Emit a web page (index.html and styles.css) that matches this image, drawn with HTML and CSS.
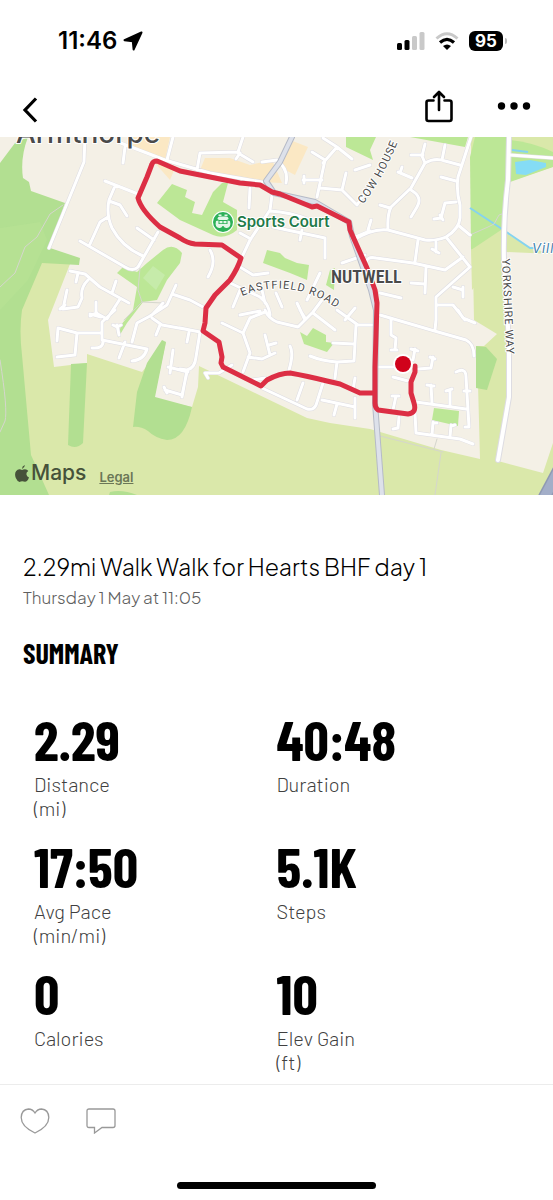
FILE: index.html
```html
<!DOCTYPE html>
<html lang="en">
<head>
    <meta charset="UTF-8">
    <meta name="viewport" content="width=device-width, initial-scale=1.0">
    <title>Walk for Hearts BHF day 1</title>
    <link rel="stylesheet" href="styles.css">
</head>
<body>

    <!-- Phone status bar -->
    <div class="status-bar">
        <div class="status-left">
            <span class="clock">11:46</span>
            <svg width="20" height="20" viewBox="0 0 20 20" stroke="#000" stroke-width="2" stroke-linejoin="round" aria-hidden="true">
                <path d="M18.500 1.500 L1.500 9.200 L9.800 10.200 L10.600 18.500Z"/>
            </svg>
        </div>
        <div class="status-right">
            <svg width="28" height="18" viewBox="0 0 28 18" aria-hidden="true">
                <rect x="0" y="11" width="5" height="7" rx="1.500"/>
                <rect x="7.500" y="8" width="5" height="10" rx="1.500"/>
                <rect x="15" y="4" width="5" height="14" rx="1.500" fill="#c9c9c9"/>
                <rect x="22.500" y="0" width="5" height="18" rx="1.500" fill="#c9c9c9"/>
            </svg>
            <svg width="24" height="18" viewBox="0 0 24 18" aria-hidden="true">
                <path d="M1.500 6.500 Q12 -3 22.500 6.500" fill="none" stroke="#c9c9c9" stroke-width="3"/>
                <path d="M5 10.500 Q12 4.200 19 10.500" fill="none" stroke="#000" stroke-width="3.200"/>
                <path d="M8 14 Q12 10.800 16 14 L12 18Z"/>
            </svg>
            <span class="battery">95</span>
        </div>
    </div>

    <!-- Navigation -->
    <header class="nav-bar">
        <button class="icon-button" aria-label="Back">
            <svg width="16" height="26" viewBox="0 0 16 26" fill="none" stroke="#000" stroke-width="3.200">
                <path d="M14 1.500 L3 13 L14 24.500"/>
            </svg>
        </button>
        <div class="nav-actions">
            <button class="icon-button" aria-label="Share">
                <svg width="28" height="33" viewBox="0 0 28 33" fill="none" stroke="#000" stroke-width="2.600" stroke-linejoin="round" stroke-linecap="round">
                    <path d="M8.500 10.500 H3.500 Q1.500 10.500 1.500 12.500 V29 Q1.500 31 3.500 31 H24.500 Q26.500 31 26.500 29 V12.500 Q26.500 10.500 24.500 10.500 H19.500"/>
                    <path d="M14 20 V2.500 M9 7 L14 2 L19 7"/>
                </svg>
            </button>
            <button class="icon-button" aria-label="More">
                <svg width="34" height="8" viewBox="0 0 34 8">
                    <circle cx="4.500" cy="4" r="3.700"/>
                    <circle cx="17" cy="4" r="3.700"/>
                    <circle cx="29.500" cy="4" r="3.700"/>
                </svg>
            </button>
        </div>
    </header>

    <!-- Route map -->
    <div class="map">
        <svg class="map-canvas" viewBox="0 137 553 358" role="img" aria-label="Map of the walk around Armthorpe">
            <defs>
                <path id="roads" d="M85 137L84 162L49 248 M125 147L123 163 M118 142L165 160L210 173L262 182 M173 137L167 160
                    M105 181L138 194 M115 186L109 200Q106 215 112 228Q122 247 143 256 M109 201L120 205L127 216 M108 217L100 222L90 244
                    M80 241L125 267Q133 272 138 267L158 232 M137 228L154 240 M70 271L85 274L100 287L129 303 M78 273L76 282
                    M88 280Q80 288 82 298L78 307L63 309L67 290 M120 299L107 319L96 313L96 302 M116 281L112 293 M60 309L65 305 M90 316L97 313
                    M176 285L167 305L150 316 M172 294L190 300L203 307 M115 310L102 322L102 340L147 349Q144 360 132 361
                    M90 314L101 317 M102 333L77 333L58 328L57 341 M77 333L75 355L57 357 M103 340Q104 349 92 348 M125 342L119 358
                    M132 342L137 323L152 315L163 303 M152 318L162 325L190 330 M160 325L156 335 M117 325L119 335 M113 325L117 327L121 325
                    M173 350L170 373 M168 367L188 372 M187 372L182 395L165 390 M164 387L167 393
                    M180 328L200 332 M189 332L187 342 M200 332L196 357Q195 368 187 370L180 369 M187 370L182 397
                    M205 373L219 373L232 365 M208 378L205 373 M222 323L243 333 M265 312L250 318L243 333L250 353L243 372 M248 357L262 359L275 353
                    M265 335L270 355 M269 345L276 343 M265 310Q268 318 277 322L298 327L313 312L322 300 M300 310L305 318 M313 313L335 330
                    M337 310L358 325L376 325 M356 325L354 361L337 362Q322 361 310 356 M333 343L354 344 M337 362L335 378
                    M290 346Q294 353 289 370 M252 380L265 378 M262 388L307 409Q315 411 317 402L323 383 M303 383L297 400
                    M322 400L355 407 M337 404L334 415 M355 398L355 418 M355 378L353 390
                    M363 325L374 325 M380 315L438 332L466 340Q474 344 474 356 M391 318L391 335L396 338L395 350 M391 350L397 350
                    M436 320L435 330 M458 310L463 318L475 323 M378 367L393 367 M393 377L408 381 M415 349L413 360 M411 349L418 351
                    M418 369L431 368L433 357 M430 357L435 359 M396 396L393 410 M392 396L399 396 M399 417L398 428L393 429
                    M416 402L466 409 M431 385L432 403 M427 385L434 386 M450 390L450 406 M446 391L452 389
                    M456 372Q466 367 466 377L469 427L465 427 M464 391L470 391 M415 413L416 433L460 439L473 444 M433 422L432 435 M451 425L450 437 M433 423L437 423 M451 426L455 425
                    M471 137L458 177Q456 190 460 205V218Q459 229 446 237Q437 241 425 240L388 230Q372 228 352 241
                    M388 230Q387 215 391 207L411 188L425 163Q435 157 445 161L460 165 M425 144L422 156L425 163 M411 155L423 155 M445 145L442 160
                    M398 172L412 178 M402 167L400 173 M441 177L456 181 M411 190Q423 197 417 207L411 217 M380 205L390 208
                    M456 202L445 203L441 218L434 219 M440 215L443 220 M368 230L371 220 M458 225L470 235
                    M446 237L470 267L436 297L436 320 M418 240L415 262 M366 262Q368 256 376 258L413 263L445 270L463 257
                    M436 242L436 252 M432 249L439 253 M426 267L425 293 M411 283L425 284 M380 293L401 298 M438 305H453L465 320
                    M453 287L463 290 M463 287V297 M197 170L200 153L238 152L243 137 M238 153L253 162 M240 153L236 159
                    M262 162L277 160Q289 170 286 183 M250 188L249 208 M272 195L270 210L250 240L242 257
                    M270 211Q290 212 310 220 M273 227L325 238V258 M240 233L251 239 M302 230L300 240 M240 267L253 275L268 273 M210 250Q217 262 208 277
                    M228 282L260 297Q269 304 270 315 M240 290L233 307 M262 290L265 303 M276 293L282 307 M312 152L325 160L317 197 M303 180L322 180 M304 176V183
                    M320 188L342 190L357 205L372 182 M346 173L342 190 M323 163L337 147L323 138 M337 147L352 159 M355 170L370 165
                    M353 238L370 231 M342 263L365 255 M297 303L305 320 M320 273L307 300 M355 308L345 320 M240 315L260 311 M510 155L553 158"/>
                <path id="yorkshire-way" d="M509 137L508 180Q503 220 504 262L509 343V397L498 460"/>
                <path id="main-road" d="M292 137L280 162L266 181L274 193L315 202L349 222L352 236L371 290L376 310L375 403L382 495"/>
                <path id="eastfield-line" d="M242 296Q290 276 338 309L346 315"/>
                <path id="cow-house-line" d="M363 204Q384 178 401 134"/>
                <path id="yorkshire-line" d="M502 259Q504 300 507 365"/>
            </defs>

            <rect y="137" width="553" height="358" fill="#dae8aa"/>

            <!-- Built-up land -->
            <g fill="#f4f0e6">
                <path d="M0 137H471V157L474 320L497 334L484 346H477L480 459L441 450L370 429L330 423L307 418L199 366L198 387L192 407L160 400L154 397L166 342L142 372L87 354V363L54 367L48 320L70 264L50 248L0 250Z"/>
                <path d="M509 182L553 167V443L543 473L498 461L509 397V343L506 252L553 254V210L506 233Z"/>
                <path d="M509 182L553 167V254L530 248L506 233Z"/>
            </g>

            <!-- Woods and parks -->
            <g fill="#b2df91">
                <path d="M0 163L15 143L28 137Q20 158 23 178L29 182L31 191L65 203L50 248L80 258L79 265L42 263L22 310Q19 330 22 355L31 455L49 495H0Z"/>
                <path d="M71 364L87 363L83 443Q76 450 68 445Z"/>
                <path d="M162 340L166 342L155 397L192 407Q185 440 167 440Q155 438 148 431Q140 426 133 427L137 392L147 363Z"/>
                <path d="M110 492Q122 489 137 495H109Z"/>
                <path d="M476 346L486 347L497 359L487 390L476 388Z"/>
            </g>
            <path d="M0 228L40 222L47 240L28 280L0 310Z" fill="#b9e495" opacity="0.500"/>
            <g fill="#bce796">
                <path d="M157 203L172 184L187 190L185 197L195 202L192 213L202 215L213 192L222 183H228L223 202L237 210V230Q225 240 213 235L180 220Z"/>
                <path d="M117 273L123 267L137 272L147 263L163 250Q173 242 182 253L180 263L167 280L157 300L143 302L127 323L118 338L121 325L133 310L137 287Z"/>
                <path d="M267 250L280 253L285 258L297 263L309 265L307 280L290 273L263 263Z"/>
                <path d="M330 270L335 268L334 290L326 285Z"/>
                <path d="M300 332L307 336L313 328L326 335V342L334 343L327 352L304 344Z"/>
                <path d="M434 408L459 411L458 426L432 420Z"/>
                <path d="M470 157L475 137H510L508 180L504 233L471 250Z"/>
                <path d="M410 137H468L465 147Z"/>
                <path d="M346 137H376L370 150L373 160L346 147Z"/>
                <path d="M510 140Q532 142 553 152V167L510 182Z"/>
            </g>
            <path d="M143 278L153 266L165 275L156 290Z" fill="#c6ebaa"/>
            <path d="M471 250L504 228V252L472 290Z" fill="#dae8aa"/>

            <!-- Shops -->
            <g fill="#fbe8c4">
                <path d="M127 145L133 137H170L165 160Z"/>
                <path d="M155 163L175 168L170 180Z"/>
                <path d="M205 158H230L250 165L272 160L282 183L260 182L200 170Z"/>
                <path d="M290 140L308 147L295 175L280 167Z"/>
            </g>

            <!-- Water -->
            <path d="M515 162L530 160L546 163V167L526 175L516 174Z" fill="#85dcf5"/>
            <path d="M512 150L528 152M470 208L496 225L530 248H536" fill="none" stroke="#85d3ef" stroke-width="2"/>

            <!-- Footpaths -->
            <path class="footpath" d="M63 205L50 214L37 237L25 247L15 273L0 287M140 268L138 290L142 302L163 303M142 302L124 320M0 360Q8 410 5 421L0 432M470 235L488 227L494 224L499 215L505 213M380 436L443 452M437 439L434 449M441 453L435 495"/>

            <!-- Roads -->
            <use href="#roads" class="road-casing"/>
            <use href="#yorkshire-way" class="road-casing road-wide-casing"/>
            <use href="#roads" class="road"/>
            <use href="#yorkshire-way" class="road road-wide"/>
            <use href="#main-road" class="main-road-casing"/>
            <use href="#main-road" class="main-road"/>
            <path d="M543 500L560 468" fill="none" stroke="#8f99b3" stroke-width="13"/>
            <path d="M543 500L560 468" fill="none" stroke="#a3aec8" stroke-width="10"/>

            <!-- Walked route -->
            <path class="route" d="M415 366L415 372L411 382V393L414 403Q417 413 408 414L378 410Q375 408 375 403V367L377 303L375 290L367 268L350 230L349 222L317 206L312 207L280 194L272 192L260 185L240 183L180 171L157 161Q153 161 152 164L147 177L138 198Q141 210 160 227L180 238Q187 243 195 244L222 245L241 258Q238 268 230 280L215 295L206 308L205 323L203 331L219 342L222 357L221 363L223 367L261 386L267 380Q280 373 290 373Q307 376 327 381L340 384L360 393H374"/>
            <circle cx="403" cy="364" r="10" fill="#fff"/>
            <circle cx="403" cy="364" r="8" fill="#d0021b"/>

            <!-- Place labels -->
            <g class="map-labels">
                <text class="label-town" x="16" y="143">Armthorpe</text>
                <text class="label-area" x="331" y="283">NUTWELL</text>
                <text class="label-road"><textPath href="#eastfield-line">EASTFIELD ROAD</textPath></text>
                <text class="label-road"><textPath href="#cow-house-line">COW HOUSE</textPath></text>
                <text class="label-road"><textPath href="#yorkshire-line">YORKSHIRE WAY</textPath></text>
                <text class="label-water" x="532" y="253">Vill</text>
                <text class="label-place" x="237" y="227">Sports Court</text>
            </g>
            <circle cx="223" cy="222" r="11" fill="#fff"/>
            <circle cx="223" cy="222" r="10" fill="#2cb157"/>
            <g fill="#e4f6e8">
                <path d="M217.500 219Q217.500 216.500 220 216.500H226Q228.500 216.500 228.500 219L227 220H219Z"/>
                <path d="M216 221Q214.500 227 219 228Q221.500 228.500 222.500 226H223.500Q224.500 228.500 227 228Q231.500 227 230 221L227.500 220.500V224H218.500V220.500Z"/>
                <path d="M219.500 221H222.500V223.200H219.500ZM223.500 221H226.500V223.200H223.500Z"/>
                <path d="M218.500 214.500H221.500V216H218.500ZM224.500 214.500H227.500V216H224.500Z"/>
            </g>
        </svg>
        <div class="map-credit">
            <span class="map-brand">
                <svg width="14" height="17" viewBox="0 0 14 17" aria-hidden="true">
                    <path d="M9.800 0Q10 2.800 7 4Q6.800 1.200 9.800 0ZM7 5Q8 4.200 10 4.200Q12.200 4.200 13.300 6Q11.200 7.200 11.400 9.300Q11.600 11.500 14 12.400Q12.300 16.800 10 16.800Q8.800 16.200 7.200 16.200Q5.600 16.200 4.600 16.900Q2.300 16.500 0.800 13Q-0.800 8.500 1.200 6Q2.600 4.200 4.600 4.300Q5.800 4.500 7 5Z"/>
                </svg>
                <span>Maps</span>
            </span>
            <a class="map-legal" href="#">Legal</a>
        </div>
    </div>

    <!-- Workout details -->
    <main class="workout">
        <h1 class="workout-title">2.29mi Walk Walk for Hearts BHF day 1</h1>
        <p class="workout-date">Thursday 1 May at 11:05</p>

        <h2 class="section-title">SUMMARY</h2>
        <div class="stats">
            <div class="stat">
                <div class="stat-value">2.29</div>
                <div class="stat-label">Distance<br>(mi)</div>
            </div>
            <div class="stat">
                <div class="stat-value">40:48</div>
                <div class="stat-label">Duration</div>
            </div>
            <div class="stat">
                <div class="stat-value">17:50</div>
                <div class="stat-label">Avg Pace<br>(min/mi)</div>
            </div>
            <div class="stat">
                <div class="stat-value">5.1K</div>
                <div class="stat-label">Steps</div>
            </div>
            <div class="stat">
                <div class="stat-value">0</div>
                <div class="stat-label">Calories</div>
            </div>
            <div class="stat">
                <div class="stat-value">10</div>
                <div class="stat-label">Elev Gain<br>(ft)</div>
            </div>
        </div>
    </main>

    <!-- Like and comment -->
    <footer class="action-bar">
        <div class="actions">
            <button class="icon-button" aria-label="Like">
                <svg width="30" height="26" viewBox="0 0 30 26" fill="none" stroke="#999" stroke-width="1.300">
                    <path d="M15 5Q12.500 1 8.500 1Q1.500 1.500 1.200 9.500Q1.200 18.500 15 25Q28.800 18.500 28.800 9.500Q28.500 1.500 21.500 1Q17.500 1 15 5Z"/>
                </svg>
            </button>
            <button class="icon-button" aria-label="Comment">
                <svg width="30" height="26" viewBox="0 0 30 26" fill="none" stroke="#999" stroke-width="1.300">
                    <path d="M3 1H27Q29 1 29 3V17.500Q29 19.500 27 19.500H16L8.500 25V19.500H3Q1 19.500 1 17.500V3Q1 1 3 1Z"/>
                </svg>
            </button>
        </div>
        <div class="home-indicator"></div>
    </footer>

</body>
</html>
```
FILE: styles.css
```css
* {
    box-sizing: border-box;
}

body {
    display: flex;
    flex-direction: column;
    min-height: 100vh;
    margin: 0;
    background-color: #fff;
    color: #000;
    font-family: Barlow, Roboto, "Liberation Sans", sans-serif;
}

svg {
    display: block;
}

.status-bar {
    display: flex;
    justify-content: space-between;
    align-items: center;
    height: 82px;
    padding: 0 50px 0 58px;
    font-family: Inter, "Liberation Sans", sans-serif;
}

.status-left,
.status-right {
    display: flex;
    align-items: center;
    gap: 6px;
}

.status-right {
    gap: 10px;
}

.clock {
    font-size: 24px;
    font-weight: 600;
    line-height: 28px;
}

.battery {
    position: relative;
    width: 34px;
    border-radius: 6px;
    background-color: #000;
    color: #fff;
    font-size: 17px;
    font-weight: 700;
    line-height: 20px;
    text-align: center;
}

.battery::after {
    content: "";
    position: absolute;
    top: 7px;
    right: -4px;
    width: 2px;
    height: 6px;
    border-radius: 0 2px 2px 0;
    background-color: #bbb;
}

.nav-bar {
    display: flex;
    justify-content: space-between;
    align-items: center;
    height: 55px;
    padding: 0 22px;
}

.nav-actions {
    display: flex;
    align-items: center;
    gap: 44px;
    padding-bottom: 7px;
}

.icon-button {
    padding: 0;
    border: 0;
    background: none;
    cursor: pointer;
}

.map {
    position: relative;
}

.map-canvas {
    width: 100%;
    height: auto;
}

.map-credit {
    position: absolute;
    left: 15px;
    bottom: 8px;
    display: flex;
    align-items: baseline;
    gap: 13px;
    font-family: Inter, "Liberation Sans", sans-serif;
}

.map-brand {
    display: flex;
    align-items: center;
    gap: 2px;
    color: #46523a;
    fill: #46523a;
    font-size: 21px;
    font-weight: 500;
    line-height: 28px;
}

.map-legal {
    color: #6b7757;
    font-size: 13px;
    font-weight: 600;
}

.road-casing,
.road,
.footpath,
.main-road-casing,
.main-road,
.route {
    fill: none;
    stroke-linecap: round;
    stroke-linejoin: round;
}

.road-casing {
    stroke: #dddce2;
    stroke-width: 4px;
}

.road {
    stroke: #fff;
    stroke-width: 3px;
}

.road-wide-casing {
    stroke-width: 6px;
}

.road-wide {
    stroke-width: 4px;
}

.footpath {
    stroke: #d5d6cd;
    stroke-width: 1px;
}

.main-road-casing {
    stroke: #b5bac7;
    stroke-width: 6px;
}

.main-road {
    stroke: #dde1ea;
    stroke-width: 4px;
}

.route {
    stroke: #dc2e44;
    stroke-width: 5px;
}

.map-labels {
    fill: #4a4a4a;
    stroke: #fff;
    stroke-width: 2px;
    stroke-linejoin: round;
    paint-order: stroke;
    font-family: Inter, "Liberation Sans", sans-serif;
}

.label-town {
    font-size: 28px;
    font-weight: 500;
}

.label-area {
    font-family: "Roboto Condensed", "Barlow Semi Condensed", Roboto, sans-serif;
    font-size: 18px;
    font-weight: 600;
}

.label-road {
    font-family: Roboto, "Liberation Sans", sans-serif;
    font-size: 11px;
    letter-spacing: 1px;
}

.label-water {
    fill: #3f7fae;
    font-size: 13px;
    font-style: italic;
    letter-spacing: 1px;
}

.label-place {
    fill: #227a48;
    font-size: 15px;
    font-weight: 600;
}

.workout {
    padding: 56px 23px 0;
}

.workout-title {
    margin: 0;
    font-family: "Plus Jakarta Sans", Lato, sans-serif;
    font-size: 23px;
    font-weight: 300;
    line-height: 32px;
}

.workout-date {
    margin: 0;
    color: #606060;
    font-family: "Plus Jakarta Sans", Lato, sans-serif;
    font-size: 17px;
    font-weight: 300;
    line-height: 28px;
}

.section-title {
    margin: 26px 0 24px;
    font-family: "Barlow Condensed", "Roboto Condensed", Roboto, sans-serif;
    font-size: 28px;
    font-weight: 700;
    line-height: 32px;
}

.stats {
    display: grid;
    grid-template-columns: 1fr 1fr;
    row-gap: 16px;
    padding: 16px 11px 0;
}

.stat-value {
    padding-bottom: 3px;
    font-family: "Barlow Condensed", "Roboto Condensed", Roboto, sans-serif;
    font-size: 56px;
    font-weight: 700;
    line-height: 60px;
}

.stat-label {
    color: #404040;
    font-size: 20px;
    font-weight: 300;
    line-height: 24px;
}

.action-bar {
    margin-top: auto;
    border-top: 1px solid #ececec;
}

.actions {
    display: flex;
    gap: 36px;
    padding: 23px 20px;
}

.home-indicator {
    width: 36%;
    height: 7px;
    margin: 25px auto 11px;
    border-radius: 4px;
    background-color: #000;
}
```
